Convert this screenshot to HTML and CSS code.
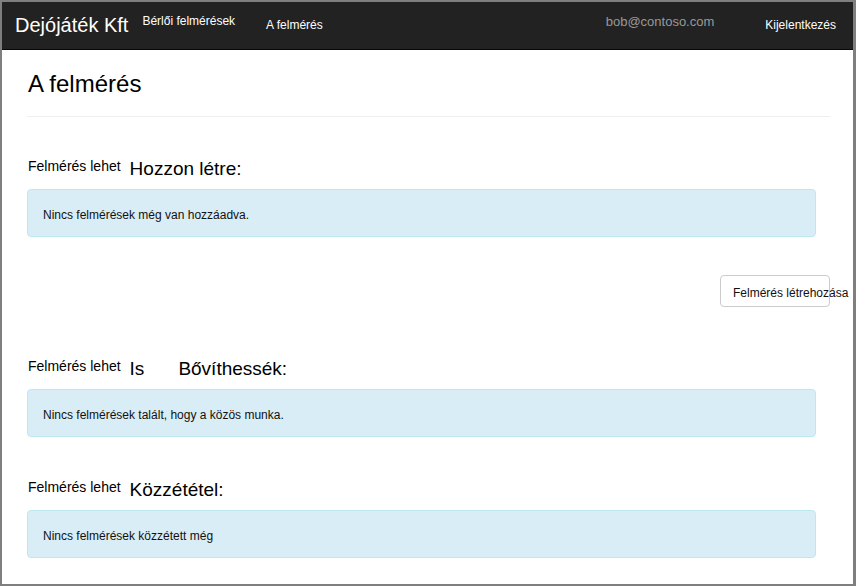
FILE: index.html
```html
<!DOCTYPE html>
<html lang="hu">
<head>
<meta charset="utf-8">
<title>A felmérés</title>
<link rel="stylesheet" href="styles.css">
</head>
<body>
<nav class="navbar">
  <a class="brand">Dejójáték Kft</a>
  <a class="nav-link nav-high">Bérlői felmérések</a>
  <a class="nav-link nav-low">A felmérés</a>
  <span class="user">bob@contoso.com</span>
  <a class="nav-link nav-low logout">Kijelentkezés</a>
</nav>
<main class="content">
  <h2 class="page-title">A felmérés</h2>
  <div class="rule"></div>

  <section class="survey-section first">
    <div class="section-head">
      <span class="head-small">Felmérés lehet</span>
      <span class="head-big">Hozzon létre:</span>
    </div>
    <div class="alert">Nincs felmérések még van hozzáadva.</div>
  </section>

  <div class="actions">
    <button class="btn">Felmérés létrehozása</button>
  </div>

  <section class="survey-section second">
    <div class="section-head">
      <span class="head-small">Felmérés lehet</span>
      <span class="head-big">Is</span>
      <span class="head-big spaced">Bővíthessék:</span>
    </div>
    <div class="alert">Nincs felmérések talált, hogy a közös munka.</div>
  </section>

  <section class="survey-section third">
    <div class="section-head">
      <span class="head-small">Felmérés lehet</span>
      <span class="head-big">Közzététel:</span>
    </div>
    <div class="alert">Nincs felmérések közzétett még</div>
  </section>
</main>
</body>
</html>
```

FILE: styles.css
```css
html {
  background: #7f7f7f;
  height: 100%;
}
body {
  margin: 2px 3px 2px 2px;
  height: 582px;
  background: #fff;
  overflow: hidden;
  font-family: "Liberation Sans", Arial, sans-serif;
  color: #000;
}
.navbar {
  display: flex;
  align-items: flex-start;
  height: 47px;
  background: #222;
  border-bottom: 1px solid #080808;
  padding: 0 17px 0 13px;
}
.brand {
  font-size: 20px;
  line-height: 24px;
  color: #fff;
  margin-top: 11px;
}
.nav-link {
  font-size: 12px;
  line-height: 16px;
  color: #fff;
}
.nav-high {
  margin-top: 11px;
  margin-left: 14px;
}
.nav-low {
  margin-top: 15px;
  margin-left: 31px;
}
.user {
  font-size: 13px;
  line-height: 16px;
  color: #999;
  margin-top: 12px;
  margin-left: auto;
}
.nav-low.logout {
  margin-left: 51px;
}
.content {
  padding: 0 23px 0 25px;
}
.page-title {
  margin: 21px 0 19px 1px;
  font-size: 24px;
  line-height: 26px;
  font-weight: normal;
}
.rule {
  border-top: 1px solid #eee;
}
.survey-section.first {
  margin-top: 39px;
}
.survey-section.second {
  margin-top: 49px;
}
.survey-section.third {
  margin-top: 40px;
}
.section-head {
  display: flex;
  align-items: flex-start;
  gap: 9px;
  height: 26px;
}
.head-small {
  font-size: 14px;
  line-height: 20px;
  margin-left: 1px;
}
.head-big {
  font-size: 19px;
  line-height: 26px;
}
.head-big.spaced {
  margin-left: 25px;
}
.alert {
  margin: 7px 14px 0 0;
  padding: 17px 15px 12px;
  font-size: 12px;
  line-height: 17px;
  color: #111;
  background: #d9edf7;
  border: 1px solid #bce8f1;
  border-radius: 4px;
}
.actions {
  display: flex;
  justify-content: flex-end;
  margin-top: 38px;
}
.btn {
  width: 110px;
  height: 32px;
  padding: 3px 0 0 12px;
  text-align: left;
  white-space: nowrap;
  overflow: visible;
  font-family: "Liberation Sans", Arial, sans-serif;
  font-size: 12px;
  color: #111;
  background: #fff;
  border: 1px solid #ccc;
  border-radius: 4px;
}
```
